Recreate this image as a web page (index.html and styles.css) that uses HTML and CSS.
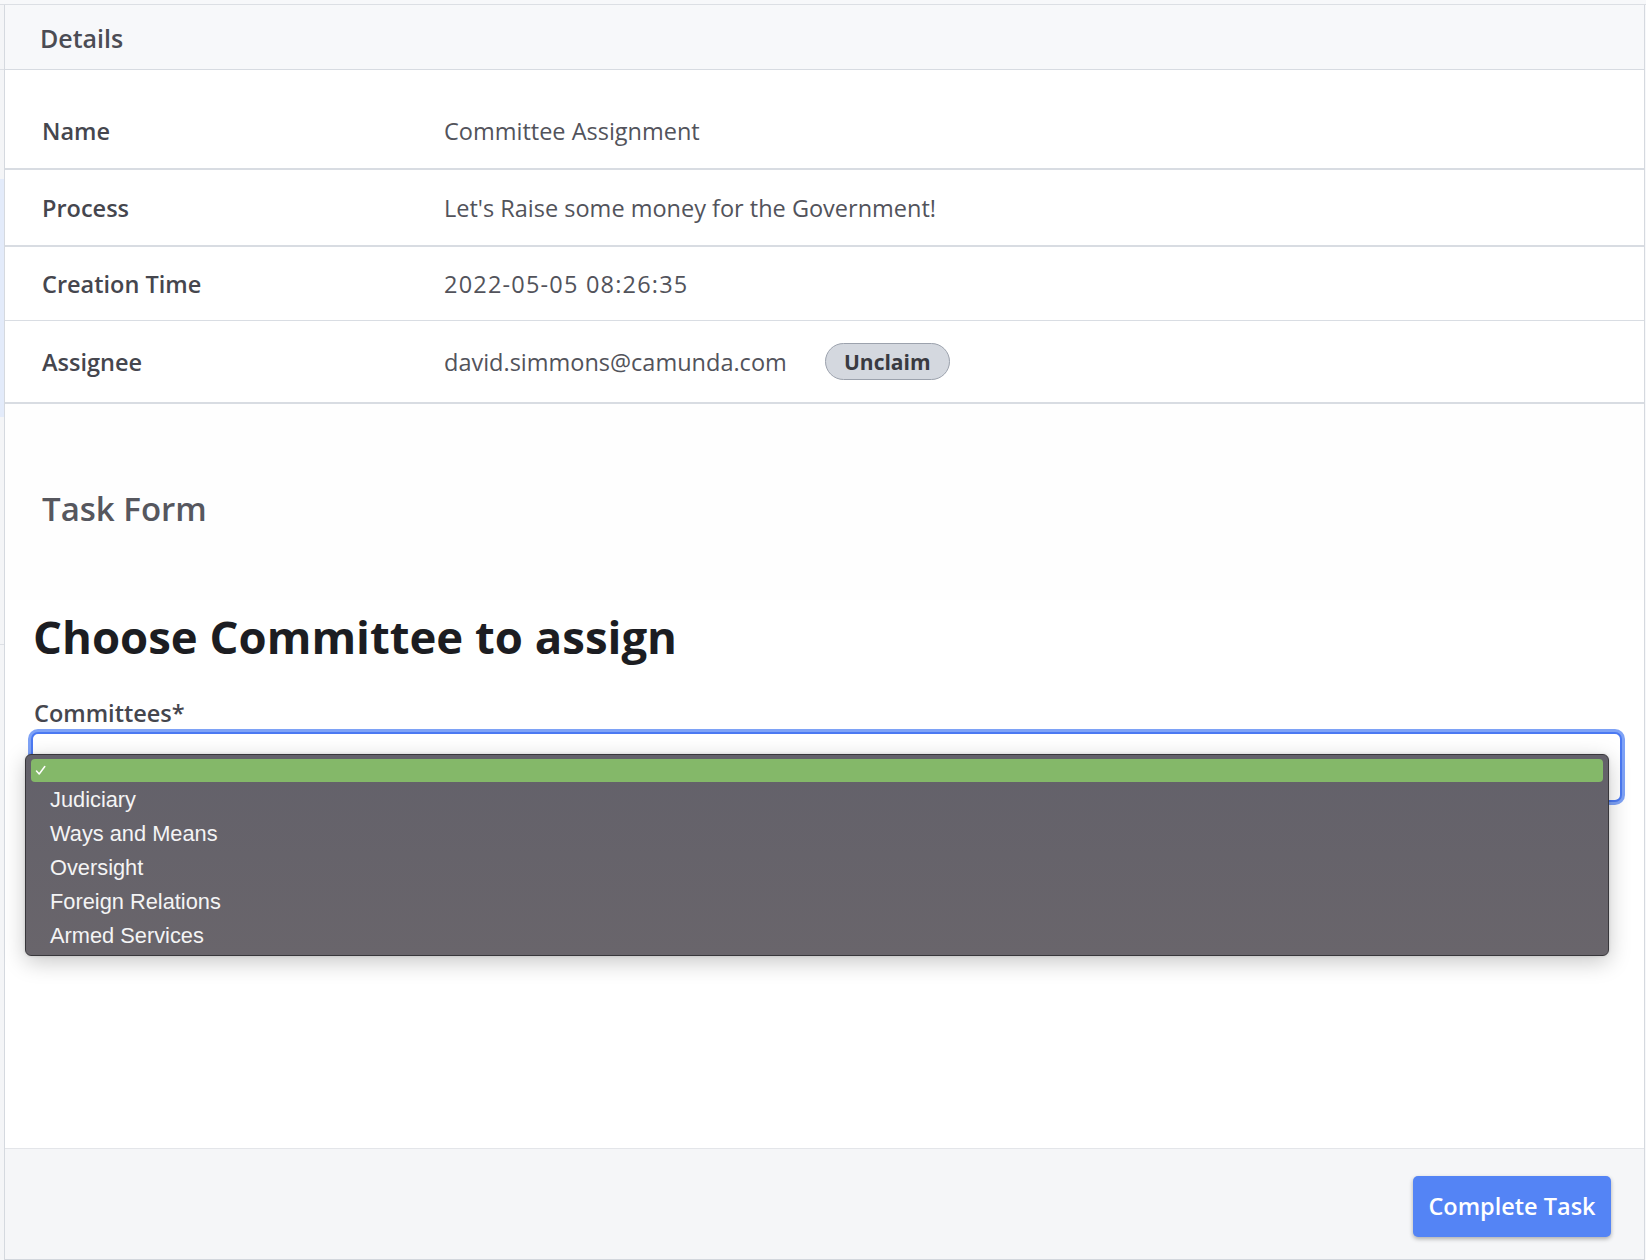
FILE: index.html
```html
<!DOCTYPE html>
<html lang="en">
<head>
<meta charset="utf-8">
<title>Task Details</title>
<link rel="stylesheet" href="styles.css">
</head>
<body>
<div class="top-rule"></div>
<div class="layout">
  <aside class="list-edge">
    <div class="edge-item edge-first"></div>
    <div class="edge-item edge-gap"></div>
    <div class="edge-item edge-selected"></div>
    <div class="edge-item edge-plain"></div>
    <div class="edge-item edge-rest"></div>
  </aside>
  <main class="panel">
    <header class="panel-header"><h2 class="panel-title">Details</h2></header>
    <section class="details">
      <div class="row row-thick">
        <div class="label">Name</div>
        <div class="value">Committee Assignment</div>
      </div>
      <div class="row row-thick">
        <div class="label">Process</div>
        <div class="value">Let's Raise some money for the Government!</div>
      </div>
      <div class="row row-thin">
        <div class="label">Creation Time</div>
        <div class="value value-date">2022-05-05 08:26:35</div>
      </div>
      <div class="row row-thick row-assignee">
        <div class="label">Assignee</div>
        <div class="value value-assignee">
          <span>david.simmons@camunda.com</span>
          <button class="pill-btn" type="button">Unclaim</button>
        </div>
      </div>
    </section>
    <section class="form-head"><h3 class="form-head-title">Task Form</h3></section>
    <section class="form-body">
      <h1 class="form-title">Choose Committee to assign</h1>
      <div class="field-label">Committees*</div>
      <div class="select-wrap">
        <div class="select-box"></div>
        <ul class="menu">
          <li class="menu-item menu-item-active"><svg class="check" width="11" height="11" viewBox="0 0 11 11"><path d="M1.5 6 L4.2 9 L9.8 1.5" fill="none" stroke="#ffffff" stroke-width="1.5" stroke-linecap="round" stroke-linejoin="round"/></svg></li>
          <li class="menu-item">Judiciary</li>
          <li class="menu-item">Ways and Means</li>
          <li class="menu-item">Oversight</li>
          <li class="menu-item">Foreign Relations</li>
          <li class="menu-item">Armed Services</li>
        </ul>
      </div>
    </section>
    <footer class="panel-footer">
      <button class="primary-btn" type="button">Complete Task</button>
    </footer>
  </main>
</div>
</body>
</html>
```
FILE: styles.css
```css
* { box-sizing: border-box; }
html, body { margin: 0; padding: 0; }
body {
  background: #f7f8fa;
  font-family: "Open Sans", "Noto Sans", sans-serif;
  width: 1646px;
  height: 1260px;
  overflow: hidden;
}
.top-rule {
  height: 5px;
  border-bottom: 1px solid #dcdfe4;
  background: #f7f8fa;
}
.layout {
  display: flex;
  height: 1255px;
  padding-right: 1px;
}
.list-edge {
  width: 4px;
  display: flex;
  flex-direction: column;
  background: #f4f5f7;
}
.edge-item { flex: none; }
.edge-first { height: 65px; border-bottom: 1px solid #dde0e5; }
.edge-gap { height: 109px; }
.edge-selected { height: 238px; background: #e3ebfa; }
.edge-plain { height: 228px; border-bottom: 1px solid #dde0e5; }
.edge-rest { flex: 1; }

.panel {
  flex: 1;
  display: flex;
  flex-direction: column;
  border-left: 1px solid #d5d9df;
  border-right: 1px solid #d5d9df;
  border-bottom: 1px solid #d2d6dc;
  background: #ffffff;
}
.panel-header {
  height: 65px;
  background: #f7f8fa;
  border-bottom: 1px solid #d7dbe1;
  display: flex;
  align-items: center;
  padding-left: 35px;
  padding-top: 2px;
}
.panel-title {
  margin: 0;
  font-size: 25px;
  font-weight: 600;
  color: #4b4c54;
}
.details {
  padding-top: 23px;
  background: #ffffff;
}
.row {
  display: flex;
  align-items: center;
  height: 77px;
  padding-left: 37px;
  border-bottom: 2px solid #d8dce2;
}
.row-thin { height: 74px; border-bottom: 1px solid #d9dde3; }
.row-assignee { height: 83px; }
.label {
  width: 402px;
  font-size: 23.5px;
  font-weight: 600;
  color: #45464e;
}
.value {
  font-size: 23.5px;
  color: #52535b;
}
.value-date { letter-spacing: 1.2px; }
.value-assignee {
  display: flex;
  align-items: center;
  gap: 38px;
}
.pill-btn {
  height: 37px;
  width: 125px;
  border-radius: 19px;
  border: 1px solid #9ca2ad;
  background: #d4d8df;
  color: #393a41;
  font-family: inherit;
  font-size: 21px;
  font-weight: 700;
  padding: 0;
}
.form-head {
  height: 196px;
  background: #fefefe;
  display: flex;
  align-items: center;
  padding-left: 37px;
  padding-top: 12px;
}
.form-head-title {
  margin: 0;
  font-size: 33px;
  font-weight: 600;
  color: #56575e;
}
.form-body {
  flex: 1;
  background: #ffffff;
  padding: 7px 22px 0 29px;
}
.form-title {
  margin: 0 0 0 -1px;
  font-size: 45.5px;
  font-weight: 700;
  color: #1c1d22;
  line-height: 58px;
}
.field-label {
  margin-top: 33px;
  font-size: 23.5px;
  font-weight: 600;
  color: #45464e;
  line-height: 30px;
}
.select-wrap {
  position: relative;
  margin-top: 4px;
  margin-left: -3px;
}
.select-box {
  height: 70px;
  border: 2px solid #4b79f2;
  border-radius: 7px;
  box-shadow: 0 0 0 3px #7ea2f6;
  background: #ffffff;
}
.menu {
  position: absolute;
  left: -6px;
  top: 22px;
  width: 1584px;
  height: 202px;
  margin: 0;
  padding: 4px 5px;
  list-style: none;
  background: linear-gradient(#63616a, #69656b);
  border: 1px solid #38373b;
  border-radius: 6px;
  box-shadow: 0 6px 22px rgba(0, 0, 0, 0.22), 0 0 3px rgba(0, 0, 0, 0.15);
  font-family: "Liberation Sans", Arial, sans-serif;
  font-size: 21.8px;
  color: #f4f4f5;
}
.menu-item {
  height: 34px;
  line-height: 34px;
  padding-left: 19px;
}
.menu-item-active {
  display: flex;
  align-items: center;
  height: 23px;
  background: #84b869;
  border-radius: 4px;
  padding-left: 4px;
  margin-bottom: 1px;
}
.check { display: block; }
.panel-footer {
  height: 111px;
  background: #f5f6f8;
  border-top: 1px solid #e3e5e9;
  display: flex;
  align-items: center;
  justify-content: flex-end;
  padding-right: 33px;
  padding-top: 4px;
}
.primary-btn {
  width: 198px;
  height: 61px;
  background: #5484f5;
  color: #ffffff;
  border: none;
  border-radius: 5px;
  box-shadow: 0 2px 4px rgba(0, 0, 0, 0.3);
  font-family: inherit;
  font-size: 23.5px;
  font-weight: 600;
}
```
